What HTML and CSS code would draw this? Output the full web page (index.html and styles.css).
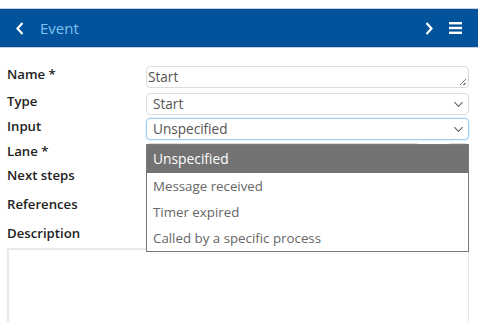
FILE: index.html
```html
<!DOCTYPE html>
<html lang="en">
<head>
  <meta charset="utf-8">
  <title>Event</title>
  <link rel="stylesheet" href="styles.css">
</head>
<body>
  <div class="topbar">
    <span class="nav-btn back">
      <svg width="8" height="13" viewBox="0 0 8 13"><path d="M6.5 1 L1.5 6.5 L6.5 12" fill="none" stroke="#fff" stroke-width="2.2"/></svg>
    </span>
    <span class="title">Event</span>
    <span class="spacer"></span>
    <span class="nav-btn fwd">
      <svg width="8" height="13" viewBox="0 0 8 13"><path d="M1.5 1 L6.5 6.5 L1.5 12" fill="none" stroke="#fff" stroke-width="2.2"/></svg>
    </span>
    <span class="nav-btn menu">
      <svg width="13" height="12" viewBox="0 0 13 12"><rect x="0" y="0" width="13" height="2.4" fill="#fff"/><rect x="0" y="4.8" width="13" height="2.4" fill="#fff"/><rect x="0" y="9.6" width="13" height="2.4" fill="#fff"/></svg>
    </span>
  </div>

  <div class="form">
    <div class="row row-name">
      <label>Name *</label>
      <div class="textbox">Start<span class="grip"></span></div>
    </div>
    <div class="row row-type">
      <label>Type</label>
      <div class="select">Start<span class="caret"></span></div>
    </div>
    <div class="row row-input">
      <label>Input</label>
      <div class="field">
        <div class="select focused">Unspecified<span class="caret"></span></div>
        <ul class="dropdown">
          <li class="selected">Unspecified</li>
          <li>Message received</li>
          <li>Timer expired</li>
          <li>Called by a specific process</li>
        </ul>
      </div>
    </div>
    <div class="row row-lane">
      <label>Lane *</label>
      <div class="lane">
        <div class="lane-select"></div>
        <div class="lane-btn"></div>
      </div>
    </div>
    <div class="row row-next">
      <label>Next steps</label>
    </div>
    <div class="row row-refs">
      <label>References</label>
      <div class="refs"><span class="refs-btn"></span></div>
    </div>
    <div class="row row-desc">
      <label>Description</label>
    </div>
    <div class="description"></div>
  </div>
</body>
</html>
```

FILE: styles.css
```css
body {
  margin: 0;
  font-family: "Open Sans", "Noto Sans", sans-serif;
  background: #fff;
  overflow: hidden;
}

.topbar {
  margin-top: 8px;
  height: 38px;
  background: #02539b;
  border-top: 1px solid #c9d3de;
  border-bottom: 1px solid #c9d3de;
  display: flex;
  align-items: center;
  padding: 0 16px 0 16px;
}
.nav-btn { display: flex; align-items: center; }
.back { margin-right: 16px; }
.title {
  color: #7fc1f2;
  font-size: 15px;
}
.spacer { flex: 1; }
.fwd { margin-right: 16px; }

.form {
  padding: 0 9px 0 7px;
  color: #222;
}
.row {
  display: grid;
  grid-template-columns: 139px 1fr;
  align-items: start;
}
.row label {
  font-size: 13.2px;
  font-weight: 600;
  line-height: 20px;
  margin-top: -2px;
}
.row-name { margin-top: 18px; }
.row-type { margin-top: 5px; }
.row-input { margin-top: 3px; }
.row-lane { margin-top: 3px; height: 24px; }
.row-next { height: 29px; }
.row-refs { height: 29px; }
.row-desc { height: 23px; }

.textbox, .select {
  height: 22px;
  box-sizing: border-box;
  border: 1px solid #dcdcdc;
  border-radius: 4px;
  font-size: 13.6px;
  line-height: 20px;
  color: #555;
  position: relative;
}
.textbox { padding-left: 1px; }
.select { padding-left: 6px; }
.select.focused { border-color: #9ccbf3; box-shadow: 0 0 2px #bcdcf7; }

.grip {
  position: absolute;
  right: 2px;
  bottom: 2px;
  width: 6px;
  height: 6px;
  background: linear-gradient(135deg, transparent 45%, #777 45%, #777 55%, transparent 55%, transparent 75%, #777 75%, #777 85%, transparent 85%);
}
.caret {
  position: absolute;
  right: 6px;
  top: 5px;
  width: 6px;
  height: 6px;
  border-right: 1.5px solid #555;
  border-bottom: 1.5px solid #555;
  transform: rotate(45deg) scale(0.9);
}

.field { position: relative; }
.dropdown {
  position: absolute;
  left: 0;
  right: 0;
  top: 26px;
  margin: 0;
  padding: 0;
  list-style: none;
  background: #fff;
  border: 1px solid #7a7a7a;
  z-index: 2;
  font-size: 13.3px;
  color: #666;
}
.dropdown li {
  height: 26px;
  line-height: 26px;
  padding-left: 6px;
}
.dropdown li.selected {
  height: 28px;
  line-height: 28px;
  background: #737373;
  color: #fff;
  font-size: 13.8px;
}

.lane { display: flex; gap: 27px; }
.lane-select {
  flex: 1;
  height: 22px;
  border: 1px solid #dcdcdc;
  border-radius: 4px;
}
.lane-btn {
  width: 20px;
  height: 22px;
  border: 1px solid #dcdcdc;
  border-radius: 4px;
}

.refs { position: relative; height: 22px; }
.refs-btn {
  position: absolute;
  right: 0;
  top: 20px;
  height: 26px;
  border-right: 2px solid #555;
}

.description {
  height: 120px;
  border: 2px solid #e8e8e8;
  border-right-width: 1px;
  border-radius: 2px;
}
```
